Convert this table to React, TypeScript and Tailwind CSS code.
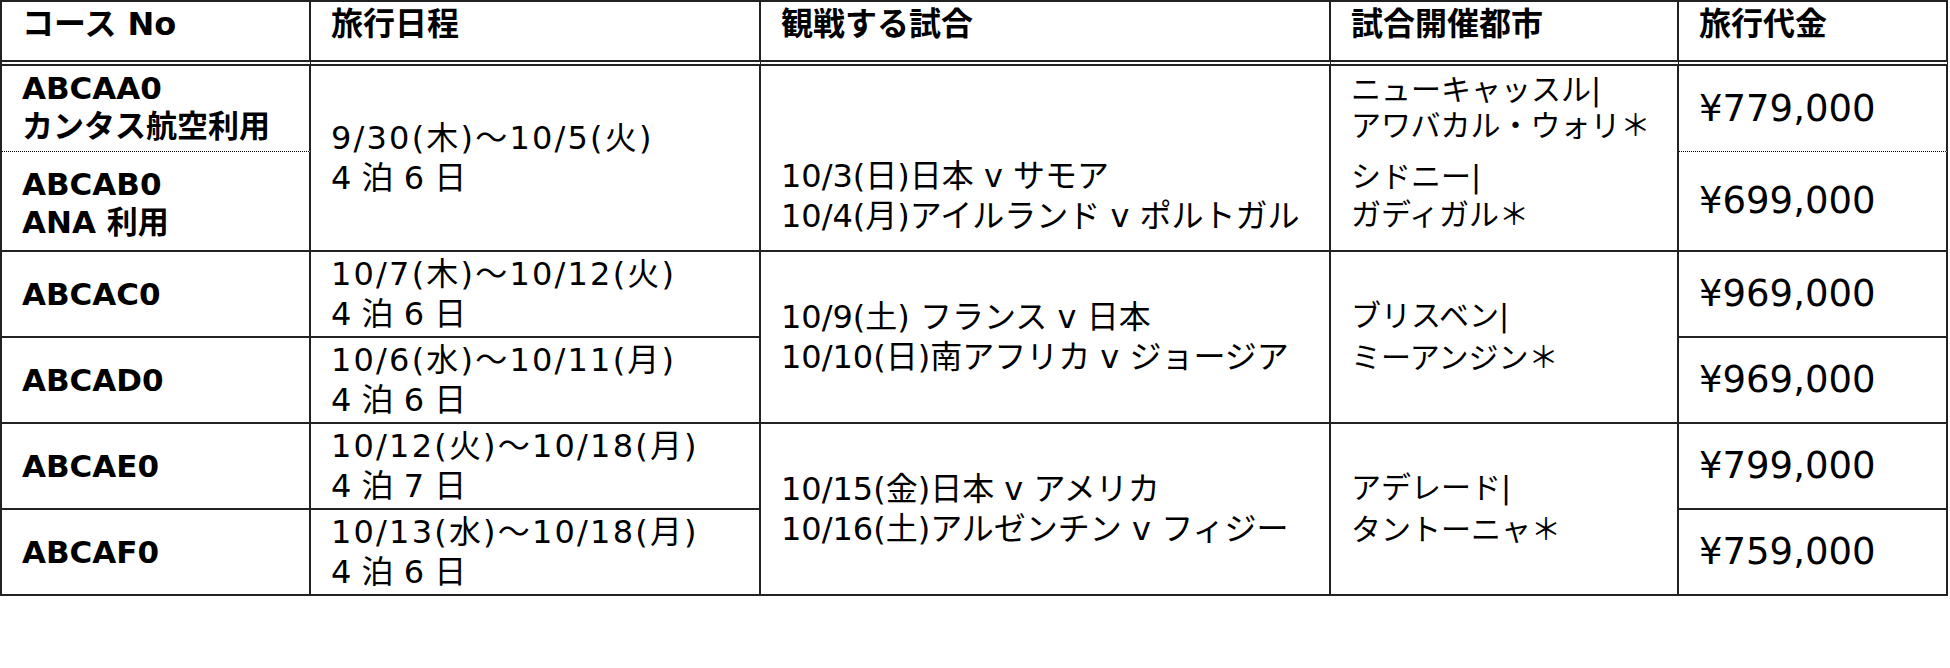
import React from "react";

const bR = "border-r-2 border-[#222]";
const solidB = "border-b-2 border-[#222]";
const dotB = "[border-bottom:1px_dotted_#000]";
const base = "px-5 whitespace-nowrap text-left";

function Code({ lines, extra = "" }: { lines: string[]; extra?: string }) {
  return (
    <div className={`font-bold text-[31px] leading-[38px] ${extra}`}>
      {lines.map((l) => (
        <div key={l}>{l}</div>
      ))}
    </div>
  );
}

function Dates({ from, to, stay }: { from: string; to: string; stay: string }) {
  return (
    <div className="text-[32px] leading-[40px]">
      <div className="tracking-[2.2px]">
        {from}
        <span>～</span>
        {to}
      </div>
      <div>{stay}</div>
    </div>
  );
}

function Lines({ lines, cls }: { lines: string[]; cls: string }) {
  return (
    <div className={cls}>
      {lines.map((l) => (
        <div key={l}>{l}</div>
      ))}
    </div>
  );
}

function Price({ v }: { v: string }) {
  return <div className="text-[37px] leading-[44px]">{v}</div>;
}

const headers = ["コース No", "旅行日程", "観戦する試合", "試合開催都市", "旅行代金"];

export default function App() {
  return (
    <div className="bg-white w-[1950px] h-[668px] text-black font-['DejaVu_Sans','Noto_Sans_CJK_JP',sans-serif]">
      <table className="table-fixed border-separate border-spacing-0 w-[1948px] border-t-2 border-l-2 border-[#222]">
        <colgroup>
          <col className="w-[309px]" />
          <col className="w-[450px]" />
          <col className="w-[570px]" />
          <col className="w-[348px]" />
          <col className="w-[269px]" />
        </colgroup>
        <thead>
          <tr className="h-[64px]">
            {headers.map((h) => (
              <th
                key={h}
                className={`${bR} ${base} [border-bottom:6px_double_#222] align-top pt-[2px] font-bold text-[32px] leading-[40px]`}
              >
                {h}
              </th>
            ))}
          </tr>
        </thead>
        <tbody>
          {/* Group 1 */}
          <tr className="h-[86px]">
            <td className={`${bR} ${dotB} ${base} align-middle pb-1`}>
              <Code lines={["ABCAA0", "カンタス航空利用"]} />
            </td>
            <td rowSpan={2} className={`${bR} ${solidB} ${base} align-middle`}>
              <Dates from="9/30(木)" to="10/5(火)" stay="4 泊 6 日" />
            </td>
            <td rowSpan={2} className={`${bR} ${solidB} ${base} align-bottom pb-[14px]`}>
              <Lines
                cls="text-[32px] leading-[40px]"
                lines={["10/3(日)日本 v サモア", "10/4(月)アイルランド v ポルトガル"]}
              />
            </td>
            <td rowSpan={2} className={`${bR} ${solidB} ${base} align-top pt-[6px]`}>
              <Lines cls="text-[30px] leading-[36px]" lines={["ニューキャッスル|", "アワバカル・ウォリ＊"]} />
              <Lines cls="text-[30px] leading-[38px] mt-[14px]" lines={["シドニー|", "ガディガル＊"]} />
            </td>
            <td className={`${bR} ${dotB} ${base} align-middle`}>
              <Price v="¥779,000" />
            </td>
          </tr>
          <tr className="h-[100px]">
            <td className={`${bR} ${solidB} ${base} align-middle pt-1`}>
              <Code lines={["ABCAB0", "ANA 利用"]} />
            </td>
            <td className={`${bR} ${solidB} ${base} align-middle`}>
              <Price v="¥699,000" />
            </td>
          </tr>

          {/* Group 2 */}
          <tr className="h-[86px]">
            <td className={`${bR} ${solidB} ${base} align-middle`}>
              <Code lines={["ABCAC0"]} />
            </td>
            <td className={`${bR} ${solidB} ${base} align-middle`}>
              <Dates from="10/7(木)" to="10/12(火)" stay="4 泊 6 日" />
            </td>
            <td rowSpan={2} className={`${bR} ${solidB} ${base} align-middle`}>
              <Lines
                cls="text-[32px] leading-[40px]"
                lines={["10/9(土) フランス v 日本", "10/10(日)南アフリカ v ジョージア"]}
              />
            </td>
            <td rowSpan={2} className={`${bR} ${solidB} ${base} align-middle`}>
              <Lines cls="text-[30px] leading-[42px]" lines={["ブリスベン|", "ミーアンジン＊"]} />
            </td>
            <td className={`${bR} ${solidB} ${base} align-middle`}>
              <Price v="¥969,000" />
            </td>
          </tr>
          <tr className="h-[86px]">
            <td className={`${bR} ${solidB} ${base} align-middle`}>
              <Code lines={["ABCAD0"]} />
            </td>
            <td className={`${bR} ${solidB} ${base} align-middle`}>
              <Dates from="10/6(水)" to="10/11(月)" stay="4 泊 6 日" />
            </td>
            <td className={`${bR} ${solidB} ${base} align-middle`}>
              <Price v="¥969,000" />
            </td>
          </tr>

          {/* Group 3 */}
          <tr className="h-[86px]">
            <td className={`${bR} ${solidB} ${base} align-middle`}>
              <Code lines={["ABCAE0"]} />
            </td>
            <td className={`${bR} ${solidB} ${base} align-middle`}>
              <Dates from="10/12(火)" to="10/18(月)" stay="4 泊 7 日" />
            </td>
            <td rowSpan={2} className={`${bR} ${solidB} ${base} align-middle`}>
              <Lines
                cls="text-[32px] leading-[40px]"
                lines={["10/15(金)日本 v アメリカ", "10/16(土)アルゼンチン v フィジー"]}
              />
            </td>
            <td rowSpan={2} className={`${bR} ${solidB} ${base} align-middle`}>
              <Lines cls="text-[30px] leading-[42px]" lines={["アデレード|", "タントーニャ＊"]} />
            </td>
            <td className={`${bR} ${solidB} ${base} align-middle`}>
              <Price v="¥799,000" />
            </td>
          </tr>
          <tr className="h-[86px]">
            <td className={`${bR} ${solidB} ${base} align-middle`}>
              <Code lines={["ABCAF0"]} />
            </td>
            <td className={`${bR} ${solidB} ${base} align-middle`}>
              <Dates from="10/13(水)" to="10/18(月)" stay="4 泊 6 日" />
            </td>
            <td className={`${bR} ${solidB} ${base} align-middle`}>
              <Price v="¥759,000" />
            </td>
          </tr>
        </tbody>
      </table>
    </div>
  );
}
